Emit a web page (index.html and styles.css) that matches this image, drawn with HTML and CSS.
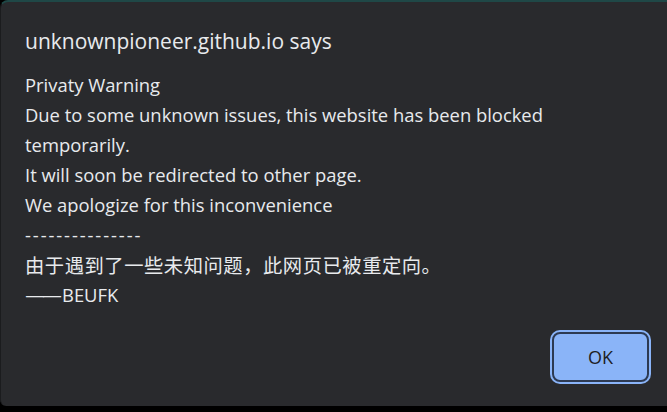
FILE: index.html
```html
<!DOCTYPE html>
<html>
<head>
<meta charset="utf-8">
<link rel="stylesheet" href="styles.css">
</head>
<body>
<div class="dialog">
  <div class="title">unknownpioneer.github.io says</div>
  <div class="message">
    <div>Privaty Warning</div>
    <div>Due to some unknown issues, this website has been blocked temporarily.</div>
    <div>It will soon be redirected to other page.</div>
    <div>We apologize for this inconvenience</div>
    <div class="hyphens">---------------</div>
    <div class="cjk">由于遇到了一些未知问题，此网页已被重定向。</div>
    <div><span class="dash">——</span>BEUFK</div>
  </div>
  <div class="actions">
    <button class="ok">OK</button>
  </div>
</div>
</body>
</html>
```
FILE: styles.css
```css
html, body {
  margin: 0;
  padding: 0;
  background: #000;
  width: 667px;
  height: 412px;
  overflow: hidden;
}
.dialog {
  box-sizing: border-box;
  width: 667px;
  height: 406px;
  background: #292a2d;
  border-top: 2px solid #1f4847;
  border-left: 1px solid #1b1c1e;
  border-radius: 8px 0 0 6px;
  padding: 24px 0 0 24px;
  color: #e8eaed;
  font-family: "Open Sans", "Noto Sans CJK SC", sans-serif;
  display: flex;
  flex-direction: column;
}
.title {
  font-size: 21px;
  line-height: 30px;
  margin-bottom: 14px;
}
.message {
  font-size: 18.4px;
  line-height: 30px;
  width: 580px;
}
.hyphens {
  letter-spacing: 1.9px;
}
.cjk {
  font-family: "Noto Sans CJK SC", sans-serif;
  font-size: 19.3px;
  letter-spacing: 0.55px;
}
.dash {
  font-family: "DejaVu Sans", sans-serif;
  font-size: 20px;
  letter-spacing: -3px;
  margin-right: 3px;
}
.actions {
  display: flex;
  justify-content: flex-end;
  padding: 22px 18px 0 0;
}
.ok {
  box-sizing: border-box;
  width: 97px;
  height: 50px;
  background: #8ab4f8;
  color: #202124;
  border: 2px solid #2d3a52;
  outline: 3px solid #8ab4f8;
  outline-offset: -6px;
  box-shadow: 0 0 0 2px #8ab4f8;
  border-radius: 8px;
  font-family: "Open Sans", sans-serif;
  font-size: 18px;
}
```
